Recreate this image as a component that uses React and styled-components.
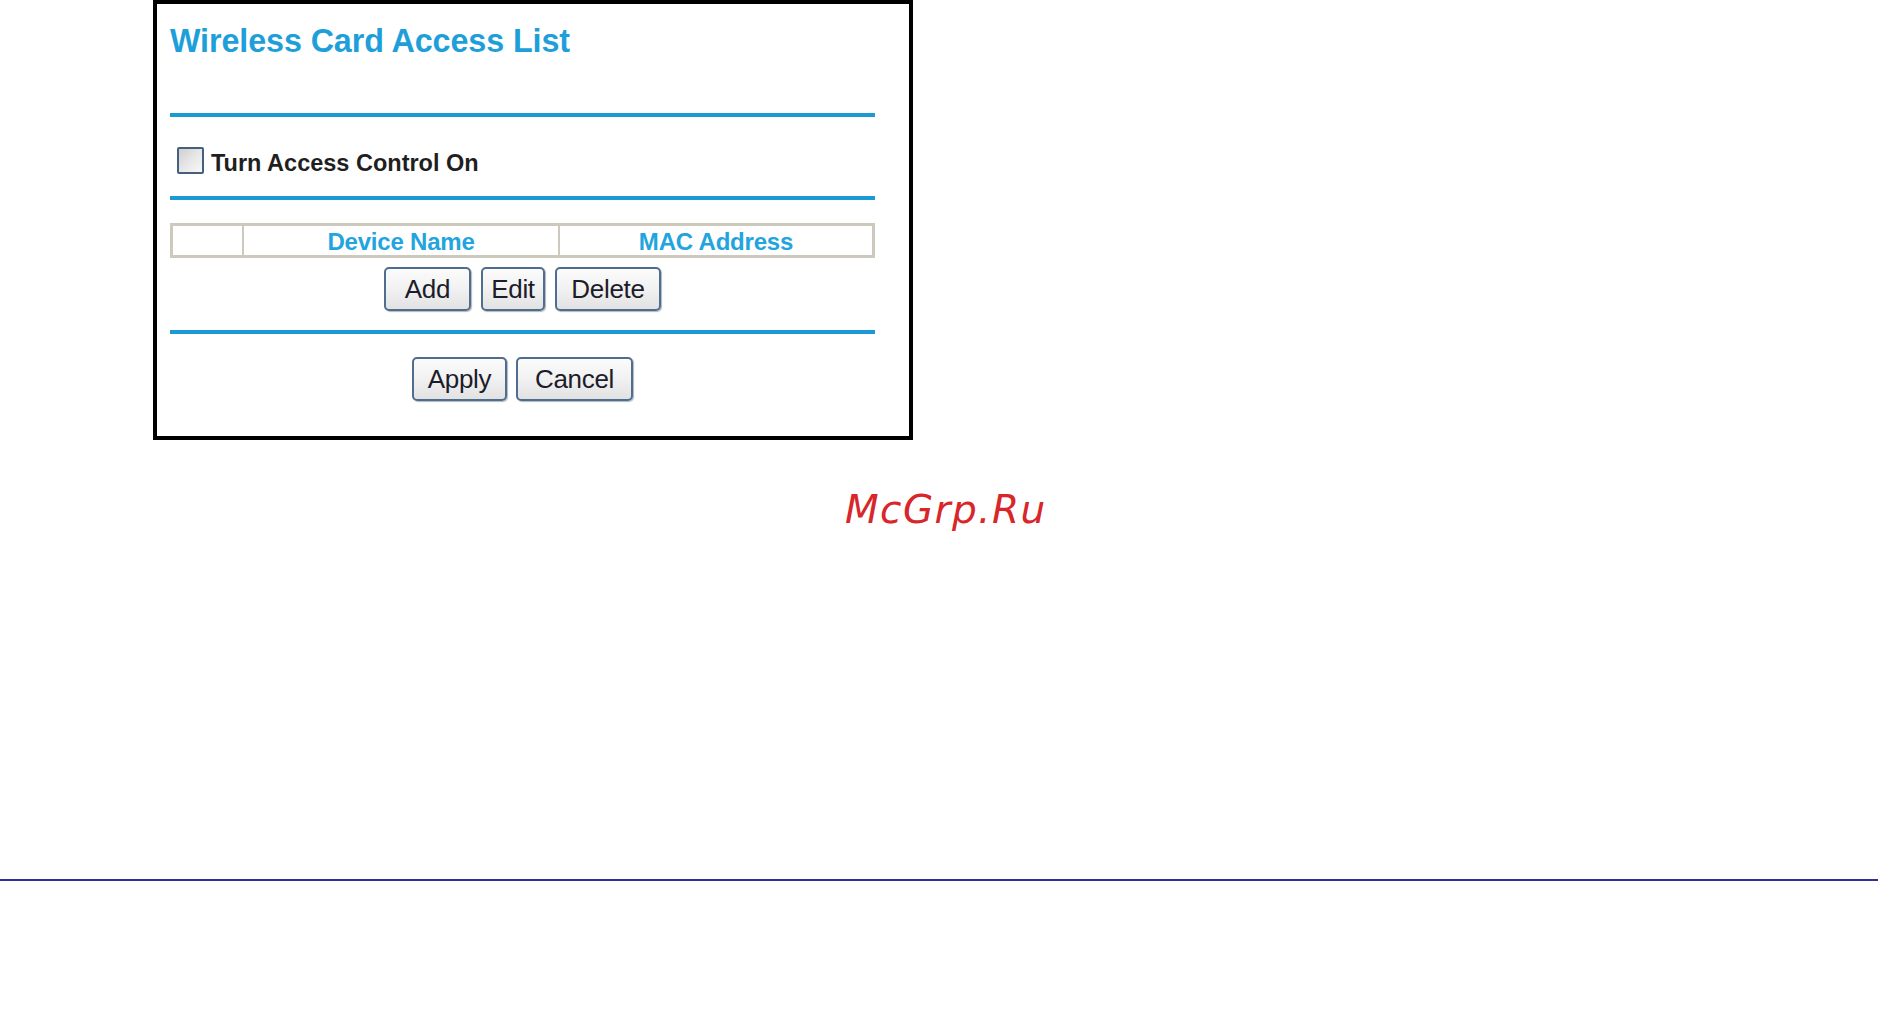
import React from "react";
import styled, { createGlobalStyle } from "styled-components";

const Global = createGlobalStyle`
  html, body { margin: 0; padding: 0; background: #ffffff; }
  body { font-family: "Liberation Sans", Arial, sans-serif; }
  * { box-sizing: border-box; }
`;

const Page = styled.div`
  width: 1878px;
  min-height: 1017px;
  display: flex;
  flex-direction: column;
  background: #fff;
`;

const Panel = styled.section`
  margin-left: 153px;
  width: 760px;
  height: 440px;
  border: 4px solid #000;
  padding: 19px 34px 0 13px;
  display: flex;
  flex-direction: column;
  background: #fff;
`;

const Title = styled.h1`
  margin: 0;
  height: 36px;
  line-height: 36px;
  font-size: 32.3px;
  font-weight: 700;
  color: #1e9fd9;
  letter-spacing: -0.1px;
`;

const Divider = styled.div`
  height: 4px;
  background: #1b9bd6;
  margin-top: ${(p) => p.$top}px;
`;

const CheckRow = styled.label`
  margin-top: 30px;
  display: flex;
  align-items: flex-start;
  gap: 7px;
  padding-left: 7px;
`;

const Box = styled.span`
  width: 27px;
  height: 27px;
  border: 2px solid #44607e;
  border-radius: 2px;
  background: linear-gradient(135deg, #cfcfcf 0%, #e9e9e9 55%, #f7f7f7 100%);
  flex: none;
`;

const CheckText = styled.span`
  margin-top: 3px;
  line-height: 27px;
  font-size: 23.5px;
  font-weight: 700;
  color: #1f1f1f;
`;

const Table = styled.div`
  margin-top: 23px;
  height: 35px;
  display: grid;
  grid-template-columns: 69px 316px 1fr;
  border: 3px solid #cdc9bc;
  background: #fff;
`;

const HeadCell = styled.div`
  border-left: ${(p) => (p.$first ? "none" : "2px solid #cdc9bc")};
  text-align: center;
  font-size: 24px;
  font-weight: 700;
  color: #22a4de;
  line-height: 29px;
  padding-top: 1px;
  letter-spacing: -0.2px;
`;

const ButtonRow = styled.div`
  margin-top: ${(p) => p.$top}px;
  display: flex;
  justify-content: center;
  gap: ${(p) => p.$gap}px;
`;

const Button = styled.button`
  width: ${(p) => p.$w}px;
  height: 44px;
  padding: 0;
  border: 2px solid #4f6d8c;
  border-radius: 5px;
  background: linear-gradient(#fbfbfb 0%, #f1f1f1 50%, #e2e2e2 100%);
  box-shadow: 1px 1px 1px rgba(40, 50, 70, 0.35);
  font-family: "Liberation Sans", Arial, sans-serif;
  font-size: 26px;
  color: #1c1c2a;
  line-height: 40px;
  letter-spacing: -0.3px;
  cursor: pointer;
`;

const Watermark = styled.div`
  margin-top: 47px;
  margin-left: 845px;
  height: 46px;
  line-height: 46px;
  font-family: "DejaVu Sans", sans-serif;
  font-style: oblique;
  font-size: 39px;
  color: #d8262a;
  letter-spacing: 1.4px;
`;

const Rule = styled.div`
  margin-top: 346px;
  height: 2px;
  width: 100%;
  background: #2e3192;
`;

export default function App() {
  return (
    <Page>
      <Global />
      <Panel>
        <Title>Wireless Card Access List</Title>
        <Divider $top={54} />
        <CheckRow>
          <Box />
          <CheckText>Turn Access Control On</CheckText>
        </CheckRow>
        <Divider $top={19} />
        <Table>
          <HeadCell $first />
          <HeadCell>Device Name</HeadCell>
          <HeadCell>MAC Address</HeadCell>
        </Table>
        <ButtonRow $top={9} $gap={10}>
          <Button $w={87}>Add</Button>
          <Button $w={64}>Edit</Button>
          <Button $w={106}>Delete</Button>
        </ButtonRow>
        <Divider $top={19} />
        <ButtonRow $top={23} $gap={9}>
          <Button $w={95}>Apply</Button>
          <Button $w={117}>Cancel</Button>
        </ButtonRow>
      </Panel>
      <Watermark>McGrp.Ru</Watermark>
      <Rule />
    </Page>
  );
}
